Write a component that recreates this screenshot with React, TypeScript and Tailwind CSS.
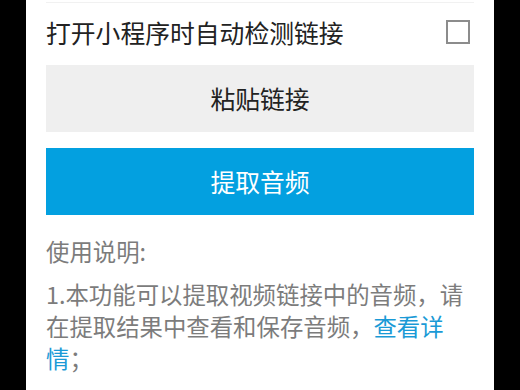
import { useState } from "react";

const font = { fontFamily: '"Noto Sans CJK SC", "Noto Sans", sans-serif' };

export default function App() {
  const [autoDetect, setAutoDetect] = useState(false);

  return (
    <div className="flex h-[390px] w-[520px] overflow-hidden bg-black" style={font}>
      <div className="w-[26px] shrink-0 bg-black" />
      <div className="flex w-[468px] shrink-0 flex-col bg-white px-[20px]">
        <div className="h-[3px] border-b border-[#f1f1f1]" />

        <div className="flex h-[62px] items-center justify-between pb-[4px]">
          <span className="text-[24.8px] leading-none text-[#222]">打开小程序时自动检测链接</span>
          <button
            onClick={() => setAutoDetect(!autoDetect)}
            className="mr-[4px] flex h-[24px] w-[24px] items-center justify-center border-2 border-[#8c8c8c] bg-white"
          >
            {autoDetect && <span className="h-[12px] w-[12px] bg-[#8c8c8c]" />}
          </button>
        </div>

        <button className="flex h-[67px] items-center justify-center bg-[#efefef] text-[24.8px] text-[#222]">
          粘贴链接
        </button>

        <button className="mt-[16px] flex h-[67px] items-center justify-center bg-[#03a0e0] text-[24.8px] text-white">
          提取音频
        </button>

        <div className="mt-[20px] text-[23.4px] leading-[32px] text-[#7c7c7c]">
          <div className="whitespace-nowrap">使用说明:</div>
          <div className="mt-[11px] whitespace-nowrap">1.本功能可以提取视频链接中的音频，请</div>
          <div className="whitespace-nowrap">
            在提取结果中查看和保存音频，<span className="text-[#1a9ad6]">查看详</span>
          </div>
          <div className="whitespace-nowrap">
            <span className="text-[#1a9ad6]">情</span>；
          </div>
        </div>
      </div>
      <div className="flex-1 bg-black" />
    </div>
  );
}
